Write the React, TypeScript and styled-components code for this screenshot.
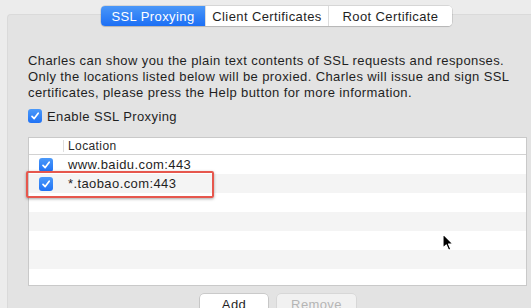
import styled, { createGlobalStyle } from 'styled-components';

const GlobalStyle = createGlobalStyle`
  html, body {
    margin: 0;
    padding: 0;
    background: #ececec;
  }
`

const tabs = ['SSL Proxying', 'Client Certificates', 'Root Certificate']
const tabWidths = [104, 123, 124]

const locations = ['www.baidu.com:443', '*.taobao.com:443', '', '', '', '', '']

const CheckIcon = () => (
  <svg width="10" height="10" viewBox="0 0 10 10">
    <path d="M2 5.3 L4.2 7.6 L8.2 2.2" fill="none" stroke="#fff" strokeWidth="1.7" strokeLinecap="round" strokeLinejoin="round" />
  </svg>
)

const Cursor = () => (
  <svg width="13" height="19" viewBox="0 0 13 19">
    <path d="M1 1 L1 15 L4.3 11.9 L6.6 17.2 L8.8 16.2 L6.5 11.1 L11 11.1 Z" fill="#000" stroke="#fff" strokeWidth="1.1" strokeLinejoin="round" />
  </svg>
)

const SSLProxying = () => {
  return (
    <Window>
      <GlobalStyle />
      <TabBar>
        {tabs.map((t, i) => (
          <Tab key={t} $active={i === 0} $first={i === 0} $last={i === tabs.length - 1} style={{ width: tabWidths[i] }}>
            {t}
          </Tab>
        ))}
      </TabBar>
      <Panel>
        <Description>
          Charles can show you the plain text contents of SSL requests and responses.<br />
          Only the locations listed below will be proxied. Charles will issue and sign SSL<br />
          certificates, please press the Help button for more information.
        </Description>
        <EnableRow>
          <CheckBox><CheckIcon /></CheckBox>
          Enable SSL Proxying
        </EnableRow>
        <Table>
          <HeaderRow>
            <CheckColumn $header />
            <HeaderLabel>Location</HeaderLabel>
          </HeaderRow>
          {locations.map((loc, i) => (
            <Row key={i} $striped={i % 2 === 1}>
              <CheckColumn>
                {loc && <CheckBox><CheckIcon /></CheckBox>}
              </CheckColumn>
              <Cell>{loc}</Cell>
            </Row>
          ))}
        </Table>
        <ButtonRow>
          <Button>Add</Button>
          <Button disabled $wide>Remove</Button>
        </ButtonRow>
      </Panel>
      <Highlight />
      <CursorSpot><Cursor /></CursorSpot>
    </Window>
  )
}

const Window = styled.div`
  position: relative;
  width: 531px;
  height: 308px;
  overflow: hidden;
  padding-top: 6px;
  box-sizing: border-box;
  background: #ececec;
  font-family: "Liberation Sans", Arial, sans-serif;
  font-size: 13px;
  letter-spacing: 0.4px;
  color: #1f1f1f;
`

const TabBar = styled.div`
  position: relative;
  z-index: 1;
  display: flex;
  margin-left: 101px;
  height: 20px;
  width: max-content;
  border-radius: 4px;
  box-shadow: 0 0 0 0.5px rgba(0, 0, 0, 0.18), 0 1px 1px rgba(0, 0, 0, 0.12);
  background: #fff;
`

const Tab = styled.div<{ $active?: boolean; $first?: boolean; $last?: boolean }>`
  display: flex;
  align-items: center;
  justify-content: center;
  box-sizing: border-box;
  height: 20px;
  font-size: 13px;
  color: ${p => (p.$active ? '#fff' : '#1f1f1f')};
  background: ${p => (p.$active ? 'linear-gradient(#4a97f8, #1c6ff5)' : '#fff')};
  border-radius: ${p => (p.$first ? '4px 0 0 4px' : p.$last ? '0 4px 4px 0' : '0')};
  border-left: ${p => (p.$first || p.$active ? 'none' : '1px solid #dcdcdc')};
`

const Panel = styled.div`
  margin: -12px 0 0 7px;
  padding: 38px 0 0 20px;
  height: 300px;
  background: #e3e3e3;
  border-top: 1px solid #dadada;
  border-left: 1px solid #dadada;
  border-radius: 4px 0 0 0;
  box-sizing: border-box;
`

const Description = styled.p`
  margin: 0;
  width: 500px;
  white-space: nowrap;
  line-height: 16px;
  font-size: 13px;
`

const EnableRow = styled.div`
  display: flex;
  align-items: center;
  gap: 5px;
  margin-top: 7px;
  height: 16px;
`

const CheckBox = styled.span`
  display: inline-flex;
  align-items: center;
  justify-content: center;
  width: 14px;
  height: 14px;
  border-radius: 3px;
  background: linear-gradient(#4b99f9, #1f72f5);
  flex-shrink: 0;
`

const Table = styled.div`
  margin-top: 13px;
  width: 499px;
  height: 149px;
  background: #fff;
  border: 1px solid #c9c9c9;
  box-sizing: border-box;
  overflow: hidden;
`

const HeaderRow = styled.div`
  display: flex;
  align-items: center;
  height: 16px;
  border-bottom: 1px solid #d2d2d2;
`

const CheckColumn = styled.div<{ $header?: boolean }>`
  display: flex;
  align-items: center;
  justify-content: flex-start;
  width: 35px;
  padding-left: 10px;
  box-sizing: border-box;
  height: ${p => (p.$header ? '12px' : '19px')};
  border-right: ${p => (p.$header ? '1px solid #dedede' : 'none')};
`

const HeaderLabel = styled.div`
  padding-left: 4px;
  font-size: 12px;
  color: #2a2a2a;
`

const Row = styled.div<{ $striped?: boolean }>`
  display: flex;
  align-items: center;
  height: 19px;
  background: ${p => (p.$striped ? '#f4f4f4' : '#fff')};
`

const Cell = styled.div`
  padding-left: 4px;
  font-size: 13px;
`

const ButtonRow = styled.div`
  display: flex;
  gap: 9px;
  margin: 8px 0 0 172px;
`

const Button = styled.button<{ $wide?: boolean }>`
  width: ${p => (p.$wide ? '79px' : '68px')};
  height: 21px;
  padding: 0;
  font-family: inherit;
  font-size: 13px;
  letter-spacing: 0.4px;
  color: #1f1f1f;
  background: #fff;
  border: none;
  border-radius: 4px;
  box-shadow: 0 0 0 0.5px rgba(0, 0, 0, 0.22), 0 1px 1px rgba(0, 0, 0, 0.12);

  &:disabled {
    color: #b5b5b5;
    background: #f1f1f1;
    box-shadow: 0 0 0 0.5px rgba(0, 0, 0, 0.1);
  }
`

const Highlight = styled.div`
  position: absolute;
  left: 26px;
  top: 171px;
  width: 188px;
  height: 27px;
  box-sizing: border-box;
  border: 2px solid #e6574d;
  border-radius: 2px;
  box-shadow: 0 1px 3px rgba(0, 0, 0, 0.35);
`

const CursorSpot = styled.div`
  position: absolute;
  left: 442px;
  top: 233px;
  line-height: 0;
`

export default SSLProxying
